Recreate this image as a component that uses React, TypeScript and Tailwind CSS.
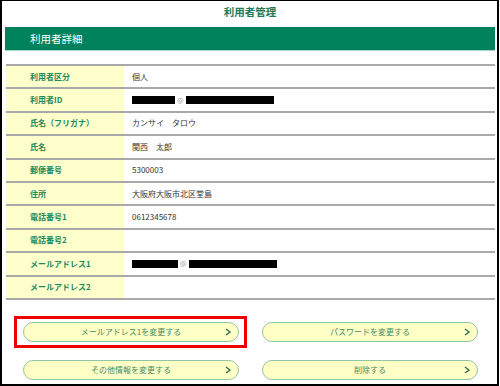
const rows: { label: string; value?: React.ReactNode }[] = [
  { label: "利用者区分", value: "個人" },
  { label: "利用者ID", value: "id" },
  { label: "氏名（フリガナ）", value: "カンサイ　タロウ" },
  { label: "氏名", value: "関西　太郎" },
  { label: "郵便番号", value: "5300003" },
  { label: "住所", value: "大阪府大阪市北区堂島" },
  { label: "電話番号1", value: "0612345678" },
  { label: "電話番号2" },
  { label: "メールアドレス1", value: "mail" },
  { label: "メールアドレス2" },
];

const Masked = ({ a, b }: { a: string; b: string }) => (
  <span className="flex items-center">
    <span className={`${a} h-[8px] bg-black`} />
    <span className="mx-[2px] text-[7px] leading-none text-[#999]">@</span>
    <span className={`${b} h-[8px] bg-black`} />
  </span>
);

const Chevron = () => (
  <svg width="6" height="8" viewBox="0 0 6 8" className="justify-self-end">
    <polyline points="1,1 5,4 1,7" fill="none" stroke="#2f6f52" strokeWidth="1.4" />
  </svg>
);

const ActionButton = ({ label }: { label: string }) => (
  <button className="grid h-[20px] w-[216px] grid-cols-[1fr_auto_1fr] items-center rounded-full border-[1.5px] border-[#93c4a4] bg-[#ffffc6] px-[7px] text-[8px] text-[#3f8c68]">
    <span />
    <span>{label}</span>
    <Chevron />
  </button>
);

export default function App() {
  return (
    <div
      className="h-[386px] w-[500px] bg-white"
      style={{ fontFamily: '"Noto Sans CJK JP", "Noto Sans", sans-serif' }}
    >
      <div className="h-[386px] w-[499px] border-t border-r-2 border-b-2 border-l-2 border-black">
        <div className="ml-[3px] mr-[2px]">
          <div className="flex h-[21px] items-center justify-center text-[10.5px] font-bold text-[#217a58]">
            利用者管理
          </div>
          <div className="mt-[5px] flex h-[24px] items-center border-b border-[#a9d6c2] bg-[#00825c] pl-[25px] text-[10.5px] text-white">
            利用者詳細
          </div>

          <div className="ml-[1px] mt-[13px] border-t-2 border-[#a9a9a9]">
            {rows.map((r) => (
              <div key={r.label} className="flex h-[23.4px] border-b-2 border-[#a9a9a9]">
                <div className="flex w-[118px] items-center bg-[#ffffcc] pl-[24px] text-[8px] font-bold text-[#1f8a5c]">
                  {r.label}
                </div>
                <div className="flex flex-1 items-center pl-[8px] text-[8px] text-[#333]">
                  {r.value === "id" ? (
                    <Masked a="w-[43px]" b="w-[88px]" />
                  ) : r.value === "mail" ? (
                    <Masked a="w-[46px]" b="w-[88px]" />
                  ) : (
                    r.value
                  )}
                </div>
              </div>
            ))}
          </div>

          <div className="ml-[18px] mt-[22px] grid grid-cols-[216px_216px] gap-x-[23px] gap-y-[18px]">
            <div className="relative">
              <ActionButton label="メールアドレス1を変更する" />
              <div className="absolute -left-[9px] -right-[8px] -top-[6px] -bottom-[6px] border-[3px] border-[#ee0000]" />
            </div>
            <ActionButton label="パスワードを変更する" />
            <ActionButton label="その他情報を変更する" />
            <ActionButton label="削除する" />
          </div>
        </div>
      </div>
    </div>
  );
}
